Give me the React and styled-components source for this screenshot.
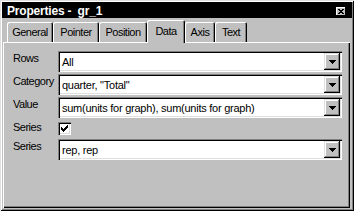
import React from "react";
import styled, { createGlobalStyle } from "styled-components";

const Global = createGlobalStyle`
  html, body { margin: 0; padding: 0; background: #c0c0c0; }
  body { font-family: "Liberation Sans", Arial, sans-serif; }
  #root { width: 354px; height: 211px; }
`;

const Window = styled.div`
  box-sizing: border-box;
  width: 354px;
  height: 211px;
  background: #c0c0c0;
  padding: 2px;
  box-shadow: inset 1px 1px #dfdfdf, inset -1px -1px #000, inset 2px 2px #fff, inset -2px -2px #808080;
  display: flex;
  flex-direction: column;
  font-family: "Liberation Sans", Arial, sans-serif;
  font-size: 11px;
  color: #000;
`;

const TitleBar = styled.div`
  box-sizing: border-box;
  height: 16px;
  flex: none;
  background: #000;
  display: flex;
  align-items: flex-start;
  justify-content: space-between;
  padding: 0 6px 0 5px;
`;

const Title = styled.div`
  color: #fff;
  font-weight: bold;
  font-size: 12px;
  letter-spacing: -0.2px;
  line-height: 16px;
  padding-top: 1px;
  white-space: pre;
`;

const CloseButton = styled.div`
  width: 10px;
  height: 9px;
  margin-top: 5px;
  background: #c0c0c0;
  box-shadow: inset -1px -1px #000, inset 1px 1px #fff;
  display: flex;
  align-items: center;
  justify-content: center;
  svg { display: block; }
`;

const Body = styled.div`
  flex: 1;
  display: flex;
  flex-direction: column;
  padding: 2px 2px 1px 1px;
`;

const TabStrip = styled.div`
  height: 22px;
  flex: none;
  display: flex;
  align-items: flex-end;
  padding-left: 4px;
`;

const Tab = styled.div`
  box-sizing: border-box;
  width: ${(p) => p.$w}px;
  height: ${(p) => (p.$active ? 23 : 20)}px;
  background: #c0c0c0;
  border-radius: 2px 2px 0 0;
  box-shadow: inset 1px 1px #fff, inset -1px 0 #000, inset -2px 0 #808080;
  display: flex;
  justify-content: center;
  padding-top: ${(p) => (p.$active ? 5 : 4)}px;
  line-height: 13px;
  letter-spacing: -0.5px;
  white-space: nowrap;
  ${(p) => p.$active && "margin-bottom: -1px; position: relative; z-index: 1;"}
`;

const Panel = styled.div`
  flex: 1;
  display: flex;
  flex-direction: column;
  padding: 9px 8px 0 10px;
  box-shadow: inset 1px 1px #fff, inset -1px -1px #000, inset -2px -2px #808080;
`;

const Row = styled.div`
  display: flex;
  align-items: flex-start;
  margin-top: ${(p) => p.$mt || 0}px;
`;

const Label = styled.div`
  width: 45px;
  flex: none;
  line-height: 13px;
  margin-top: ${(p) => p.$offset ?? 1}px;
  letter-spacing: -0.5px;
  white-space: nowrap;
`;

const Combo = styled.div`
  box-sizing: border-box;
  flex: 1;
  height: 21px;
  padding: 2px;
  background: #fff;
  display: flex;
  box-shadow: inset 1px 1px #808080, inset 2px 2px #000, inset -1px -1px #fff, inset -2px -2px #dfdfdf;
`;

const ComboText = styled.div`
  flex: 1;
  height: 17px;
  box-sizing: border-box;
  padding: 2px 0 0 2px;
  line-height: 15px;
  letter-spacing: -0.25px;
  white-space: nowrap;
  overflow: hidden;
`;

const DropButton = styled.div`
  width: 16px;
  height: 17px;
  flex: none;
  background: #c0c0c0;
  box-shadow: inset -1px -1px #000, inset 1px 1px #dfdfdf, inset -2px -2px #808080, inset 2px 2px #fff;
  display: flex;
  align-items: center;
  justify-content: center;
  svg { display: block; }
`;

const CheckBox = styled.div`
  box-sizing: border-box;
  width: 13px;
  height: 13px;
  background: #fff;
  box-shadow: inset 1px 1px #808080, inset 2px 2px #000, inset -1px -1px #fff, inset -2px -2px #dfdfdf;
  display: flex;
  align-items: center;
  justify-content: center;
  svg { display: block; }
`;

const Pixels = ({ rows, w, h }) => (
  <svg width={w} height={h} viewBox={`0 0 ${w} ${h}`} shapeRendering="crispEdges">
    {rows.map((r, y) =>
      r.split("").map((c, x) =>
        c === "X" ? <rect key={`${x}-${y}`} x={x} y={y} width="1" height="1" fill="#000" /> : null
      )
    )}
  </svg>
);

const ArrowIcon = () => (
  <Pixels w={7} h={4} rows={["XXXXXXX", ".XXXXX.", "..XXX..", "...X..."]} />
);

const CloseIcon = () => (
  <Pixels w={6} h={5} rows={["XX..XX", ".XXXX.", "..XX..", ".XXXX.", "XX..XX"]} />
);

const CheckIcon = () => (
  <Pixels
    w={7}
    h={7}
    rows={["......X", ".....XX", "X...XXX", "XX.XXX.", "XXXXX..", ".XXX...", "..X...."]}
  />
);

const tabs = [
  { label: "General", w: 46 },
  { label: "Pointer", w: 46 },
  { label: "Position", w: 48 },
  { label: "Data", w: 38, active: true },
  { label: "Axis", w: 30 },
  { label: "Text", w: 32 },
];

const ComboField = ({ value }) => (
  <Combo>
    <ComboText>{value}</ComboText>
    <DropButton>
      <ArrowIcon />
    </DropButton>
  </Combo>
);

export default function App() {
  return (
    <>
      <Global />
      <Window>
        <TitleBar>
          <Title>{"Properties -  gr_1"}</Title>
          <CloseButton>
            <CloseIcon />
          </CloseButton>
        </TitleBar>
        <Body>
          <TabStrip>
            {tabs.map((t) => (
              <Tab key={t.label} $w={t.w} $active={t.active}>
                {t.label}
              </Tab>
            ))}
          </TabStrip>
          <Panel>
            <Row>
              <Label>Rows</Label>
              <ComboField value="All" />
            </Row>
            <Row $mt={2}>
              <Label>Category</Label>
              <ComboField value={'quarter, "Total"'} />
            </Row>
            <Row $mt={2}>
              <Label>Value</Label>
              <ComboField value="sum(units for graph), sum(units for graph)" />
            </Row>
            <Row $mt={4}>
              <Label $offset={-1}>Series</Label>
              <CheckBox>
                <CheckIcon />
              </CheckBox>
            </Row>
            <Row $mt={4}>
              <Label>Series</Label>
              <ComboField value="rep, rep" />
            </Row>
          </Panel>
        </Body>
      </Window>
    </>
  );
}
